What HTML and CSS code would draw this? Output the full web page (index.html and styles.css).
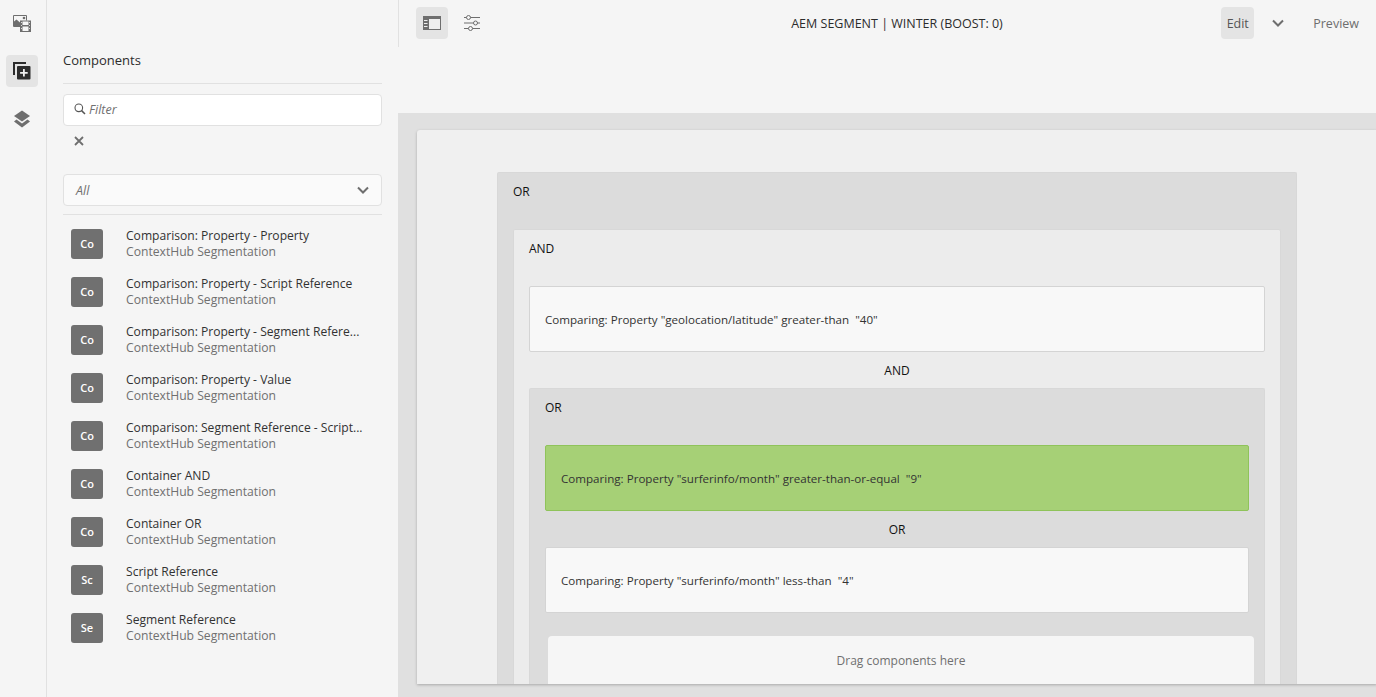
FILE: index.html
```html
<!DOCTYPE html>
<html lang="en">
  <head>
    <meta charset="UTF-8" />
    <title>AEM Segment | Winter (Boost: 0)</title>
    <link rel="stylesheet" href="styles.css">
  </head>

  <body>
    <div class="app">
      <div class="rail">
        <div class="rail-btn">
          <svg width="18" height="18" viewBox="0 0 18 18">
            <path d="M.5 1.500h13v5M.5 1.500v11h6.500" fill="none" stroke="#6e6e6e"/>
            <path d="M1 12V7.500l2.500-2L7 8.500V12z" fill="#6e6e6e"/>
            <circle cx="11" cy="4" r="1.300" fill="#6e6e6e"/>
            <rect x="7" y="6.500" width="11" height="11.500" fill="#6e6e6e"/>
            <path d="M9.500 7.500h6v3.500h-6zM9.500 12.500h6v4.500h-6zM8 8h.800v1H8zM8 11h.800v1H8zM8 14h.800v1H8zM16.200 8h.800v1h-.800zM16.200 11h.800v1h-.800zM16.200 14h.800v1h-.800z" fill="#f5f5f5"/>
          </svg>
        </div>
        <div class="rail-btn rail-btn-on">
          <svg width="18" height="18" viewBox="0 0 18 18">
            <path d="M0 0h13v2H2v11H0z" fill="#2c2c2c"/>
            <rect x="4" y="4" width="13.500" height="13.500" rx="1" fill="#2c2c2c"/>
            <path d="M10 7h1.800v2.900h2.900v1.800h-2.900v2.900H10v-2.900H7.100V9.900H10z" fill="#eee"/>
          </svg>
        </div>
        <div class="rail-btn">
          <svg width="18" height="18" viewBox="0 0 18 18">
            <path d="M9 .5 17 6 9 11.500 1 6z" fill="#6e6e6e"/>
            <path d="M3.500 9.500 1 11.500 9 17.500l8-6-2.500-2L9 13.600z" fill="#6e6e6e"/>
          </svg>
        </div>
      </div>

      <div class="side">
        <h2 class="side-title">Components</h2>
        <div class="filter">
          <svg width="12" height="12" viewBox="0 0 12 12">
            <circle cx="4.800" cy="4.800" r="3.800" fill="none" stroke="#555" stroke-width="1.100"/>
            <path d="M7.600 7.600 11 11" stroke="#555" stroke-width="1.500"/>
          </svg>
          <span>Filter</span>
        </div>
        <div class="clear">
          <svg width="10" height="10" viewBox="0 0 10 10">
            <path d="M1 1l8 8M9 1l-8 8" stroke="#6e6e6e" stroke-width="1.800"/>
          </svg>
        </div>
        <div class="select">
          <span>All</span>
          <svg width="12" height="8" viewBox="0 0 12 8">
            <path d="M1 1.500l5 5 5-5" fill="none" stroke="#6e6e6e" stroke-width="2"/>
          </svg>
        </div>
        <div class="list">
          <div class="item">
            <div class="badge">Co</div>
            <div class="item-text"><div class="item-name">Comparison: Property - Property</div><div class="item-group">ContextHub Segmentation</div></div>
          </div>
          <div class="item">
            <div class="badge">Co</div>
            <div class="item-text"><div class="item-name">Comparison: Property - Script Reference</div><div class="item-group">ContextHub Segmentation</div></div>
          </div>
          <div class="item">
            <div class="badge">Co</div>
            <div class="item-text"><div class="item-name">Comparison: Property - Segment Refere...</div><div class="item-group">ContextHub Segmentation</div></div>
          </div>
          <div class="item">
            <div class="badge">Co</div>
            <div class="item-text"><div class="item-name">Comparison: Property - Value</div><div class="item-group">ContextHub Segmentation</div></div>
          </div>
          <div class="item">
            <div class="badge">Co</div>
            <div class="item-text"><div class="item-name">Comparison: Segment Reference - Script...</div><div class="item-group">ContextHub Segmentation</div></div>
          </div>
          <div class="item">
            <div class="badge">Co</div>
            <div class="item-text"><div class="item-name">Container AND</div><div class="item-group">ContextHub Segmentation</div></div>
          </div>
          <div class="item">
            <div class="badge">Co</div>
            <div class="item-text"><div class="item-name">Container OR</div><div class="item-group">ContextHub Segmentation</div></div>
          </div>
          <div class="item">
            <div class="badge">Sc</div>
            <div class="item-text"><div class="item-name">Script Reference</div><div class="item-group">ContextHub Segmentation</div></div>
          </div>
          <div class="item">
            <div class="badge">Se</div>
            <div class="item-text"><div class="item-name">Segment Reference</div><div class="item-group">ContextHub Segmentation</div></div>
          </div>
        </div>
      </div>

      <div class="main">
        <div class="topbar">
          <div class="tools">
            <div class="tool tool-on">
              <svg width="18" height="14" viewBox="0 0 18 14">
                <path d="M0 0h18v14H0z" fill="#6e6e6e"/>
                <path d="M6 3h11v10H6z" fill="#eee"/>
                <path d="M1 4h3.500v1H1zM1 7h3.500v1H1zM1 10h3.500v1H1z" fill="#eee"/>
              </svg>
            </div>
            <div class="tool">
              <svg width="16" height="16" viewBox="0 0 16 16">
                <path d="M0 2.500h16M0 8h16M0 13.500h16" stroke="#6e6e6e" stroke-width="1"/>
                <circle cx="4.500" cy="2.500" r="2" fill="#f5f5f5" stroke="#6e6e6e" stroke-width="1"/>
                <circle cx="11.500" cy="8" r="2" fill="#f5f5f5" stroke="#6e6e6e" stroke-width="1"/>
                <circle cx="6.500" cy="13.500" r="2" fill="#f5f5f5" stroke="#6e6e6e" stroke-width="1"/>
              </svg>
            </div>
          </div>
          <div class="page-title">AEM SEGMENT | WINTER (BOOST: 0)</div>
          <div class="modes">
            <div class="mode mode-on">Edit</div>
            <div class="mode-arrow">
              <svg width="12" height="8" viewBox="0 0 12 8">
                <path d="M1 1.500l5 5 5-5" fill="none" stroke="#6e6e6e" stroke-width="2"/>
              </svg>
            </div>
            <div class="mode">Preview</div>
          </div>
        </div>

        <div class="canvas">
          <div class="frame">
            <div class="box box-dark">
              <div class="box-label">OR</div>
              <div class="box box-light">
                <div class="box-label">AND</div>
                <div class="rule">Comparing: Property "geolocation/latitude" greater-than&nbsp; "40"</div>
                <div class="join">AND</div>
                <div class="box box-dark box-nested">
                  <div class="box-label">OR</div>
                  <div class="rule rule-on">Comparing: Property "surferinfo/month" greater-than-or-equal&nbsp; "9"</div>
                  <div class="join">OR</div>
                  <div class="rule">Comparing: Property "surferinfo/month" less-than&nbsp; "4"</div>
                  <div class="drop">Drag components here</div>
                </div>
              </div>
            </div>
          </div>
        </div>
      </div>
    </div>
  </body>
</html>
```

FILE: styles.css
```css
* {
  margin: 0;
  padding: 0;
  box-sizing: border-box;
}
html,
body {
  height: 100%;
  overflow: hidden;
}
body {
  font-family: "Open Sans", "Noto Sans", sans-serif;
  font-size: 12px;
  color: #2c2c2c;
  background: #f5f5f5;
}
.app {
  height: 100vh;
  display: flex;
}

/* left icon rail */
.rail {
  width: 47px;
  flex: none;
  border-right: 1px solid #e1e1e1;
  padding-top: 7px;
  display: flex;
  flex-direction: column;
  align-items: center;
  gap: 16px;
  padding-right: 3px;
}
.rail-btn {
  width: 32px;
  height: 32px;
  border-radius: 4px;
  display: flex;
  align-items: center;
  justify-content: center;
}
.rail-btn-on {
  background: #e4e4e4;
}

/* components panel */
.side {
  width: 351px;
  flex: none;
  padding: 0 16px;
}
.side-title {
  font-size: 13px;
  font-weight: 400;
  height: 37px;
  margin-top: 47px;
  line-height: 26px;
  border-bottom: 1px solid #e1e1e1;
}
.filter {
  margin-top: 10px;
  height: 32px;
  background: #fff;
  border: 1px solid #e1e1e1;
  border-radius: 4px;
  padding: 0 0 2px 10px;
  display: flex;
  align-items: center;
  gap: 3px;
  font-size: 12.500px;
  font-style: italic;
  color: #707070;
}
.clear {
  height: 30px;
  padding: 0 0 1px 11px;
  display: flex;
  align-items: center;
}
.select {
  margin-top: 18px;
  height: 32px;
  background: #fafafa;
  border: 1px solid #e1e1e1;
  border-radius: 4px;
  padding: 0 12px;
  display: flex;
  align-items: center;
  justify-content: space-between;
  font-size: 12.500px;
  font-style: italic;
  color: #707070;
}
.list {
  margin-top: 8px;
  padding-top: 5px;
  border-top: 1px solid #e1e1e1;
}
.item {
  height: 48px;
  display: flex;
  align-items: center;
  padding-left: 8px;
  gap: 23px;
}
.badge {
  width: 32px;
  height: 30px;
  flex: none;
  background: #707070;
  border-radius: 3px;
  color: #fff;
  font-size: 11px;
  font-weight: 600;
  text-align: center;
  line-height: 30px;
}
.item-text {
  min-width: 0;
  flex: 1;
  line-height: 16px;
}
.item-name {
  font-size: 12.100px;
  color: #323232;
  white-space: nowrap;
}
.item-group {
  font-size: 12.150px;
  color: #707070;
}

/* top bar and canvas */
.main {
  flex: 1;
  min-width: 0;
  display: flex;
  flex-direction: column;
}
.topbar {
  height: 113px;
  flex: none;
  display: grid;
  grid-template-columns: 1fr auto 1fr;
  align-items: start;
  position: relative;
  padding: 7px 0 0 18px;
}
.topbar::before {
  content: "";
  position: absolute;
  left: 0;
  top: 0;
  height: 47px;
  border-left: 1px solid #e1e1e1;
}
.tools {
  display: flex;
  gap: 8px;
}
.tool {
  width: 32px;
  height: 32px;
  border-radius: 4px;
  display: flex;
  align-items: center;
  justify-content: center;
}
.tool-on {
  background: #e4e4e4;
}
.page-title {
  font-size: 12.500px;
  line-height: 33px;
  margin-left: 2px;
}
.modes {
  display: flex;
  align-items: center;
  justify-content: flex-end;
  padding-right: 17px;
  font-size: 12.500px;
  color: #6e6e6e;
}
.mode {
  height: 32px;
  line-height: 33px;
}
.mode-on {
  width: 33px;
  text-align: center;
  color: #555;
  background: #e4e4e4;
  border-radius: 4px;
}
.mode-arrow {
  width: 59px;
  padding-left: 18px;
  display: flex;
}
.canvas {
  flex: 1;
  min-height: 0;
  background: #e0e0e0;
  padding: 17px 0 13px 19px;
  overflow: hidden;
}
.frame {
  width: 960px;
  height: 100%;
  background: #f0f0f0;
  border-radius: 3px 0 0 0;
  box-shadow: 0 1px 3px rgba(0, 0, 0, 0.25);
  padding: 42px 80px 0;
  overflow: hidden;
}

/* segment tree */
.box {
  border-radius: 2px;
  padding: 0 15px;
  border: 1px solid #d8d8d8;
  border-bottom: 0;
}
.box-dark {
  background: #dcdcdc;
}
.box-light {
  background: #ececec;
}
.box-label {
  height: 56px;
  padding-top: 9px;
  line-height: 20px;
  font-size: 12px;
  color: #111;
}
.rule {
  height: 66px;
  background: #f8f8f8;
  border: 1px solid #d4d4d4;
  border-radius: 2px;
  padding-left: 15px;
  display: flex;
  align-items: center;
  font-size: 11.600px;
  color: #333;
}
.rule-on {
  background: #a6d076;
  border-color: #8fc35a;
}
.join {
  height: 36px;
  line-height: 37px;
  text-align: center;
  font-size: 12px;
  color: #111;
}
.drop {
  width: 706px;
  height: 60px;
  margin: 23px 0 0 3px;
  background: #f6f6f6;
  border-radius: 4px;
  padding-top: 15px;
  line-height: 20px;
  text-align: center;
  font-size: 12px;
  color: #707070;
}
```
